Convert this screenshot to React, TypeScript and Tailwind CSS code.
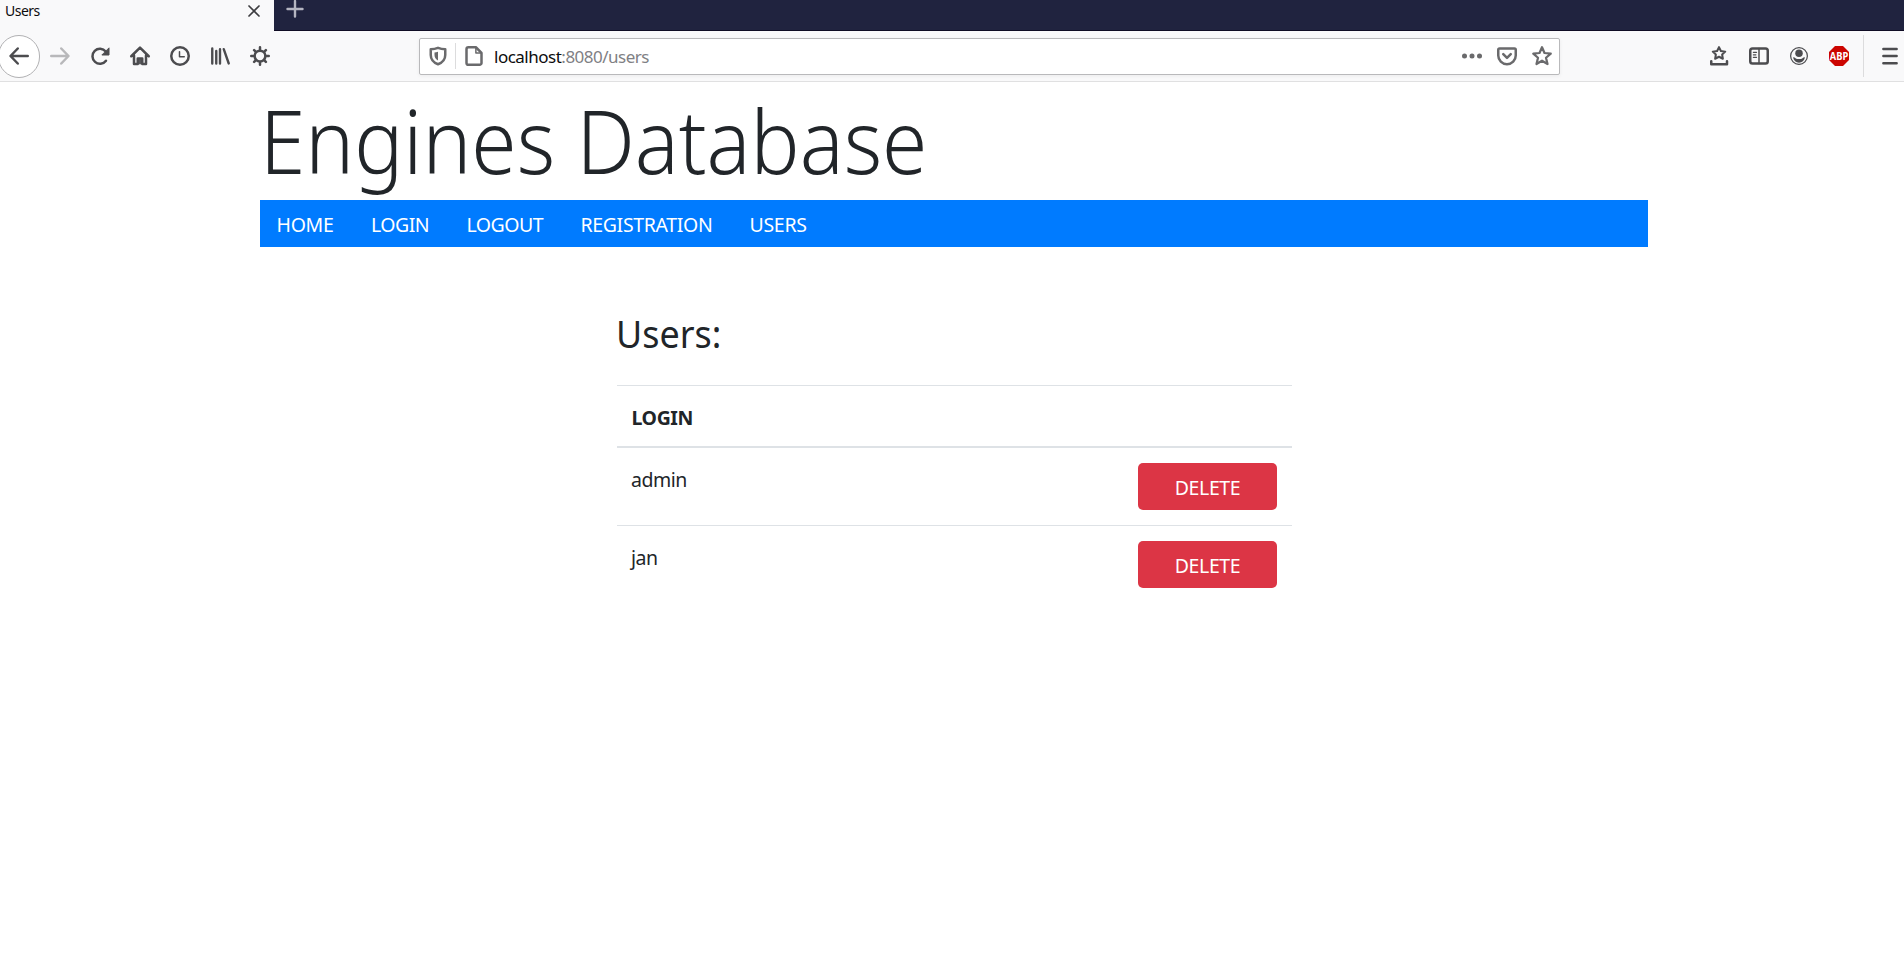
import React from "react";

const svg = "block h-5 w-5 shrink-0 overflow-visible";

function Icon({ children, color = "#4c4c4f", className = "" }: { children: React.ReactNode; color?: string; className?: string }) {
  return (
    <svg viewBox="0 0 16 16" className={`${svg} ${className}`} fill="none" stroke={color} strokeWidth={2} strokeLinecap="round" strokeLinejoin="round">
      {children}
    </svg>
  );
}

const navItems = [
  { label: "HOME", cls: "w-[94.5px] tracking-[-0.3px]" },
  { label: "LOGIN", cls: "w-[95.5px] tracking-[-0.5px]" },
  { label: "LOGOUT", cls: "w-[114px] tracking-[-0.5px]" },
  { label: "REGISTRATION", cls: "w-[169px] tracking-[-0.35px]" },
  { label: "USERS", cls: "tracking-[-0.3px]" },
];

function Chrome() {
  return (
    <header className="font-['Noto_Sans','Open_Sans',sans-serif]">
      <div className="flex h-[31px] border-b border-[#0f0c24] bg-[#20233f]">
        <div className="flex h-[31px] w-[274px] shrink-0 items-start justify-between bg-[#f9f9fa] pl-[5px] pr-[14.5px]">
          <span className="mt-[1px] text-[14px] leading-[20px] tracking-[-0.5px] text-[#0c0c0d]">Users</span>
          <svg viewBox="0 0 12 12" className="mt-[5px] block h-3 w-3" fill="none" stroke="#3d3d40" strokeWidth="1.7" strokeLinecap="round">
            <path d="M1 1l10 10M11 1L1 11" />
          </svg>
        </div>
        <svg viewBox="0 0 18 18" className="ml-3 block h-[18px] w-[18px]" fill="none" stroke="#b4b5c1" strokeWidth="2.4" strokeLinecap="round">
          <path d="M9 1v15.500M1.500 9h15" />
        </svg>
      </div>
      <div className="flex h-[51px] items-center border-b border-[#e0e0e1] bg-[#f9f9fa]">
        <div className="-ml-[2px] flex h-[43px] w-[42px] shrink-0 items-center justify-center rounded-full border border-[#b1b1b3] bg-white">
          <Icon>
            <path d="M15 8H1.500M7 2L1.200 8 7 14" />
          </Icon>
        </div>
        <div className="ml-[10px] flex gap-5">
          <Icon color="#b8b8ba">
            <path d="M1 8h13.500M9 2l5.800 6L9 14" />
          </Icon>
          <Icon>
            <path d="M12.800 11.800A6 6 0 1 1 12.600 4.400" />
            <path d="M15.200 1.800v5.400H9.800z" fill="#4c4c4f" strokeWidth="0.800" />
          </Icon>
          <Icon>
            <path d="M1 8.200L8 1.300l7 6.900M3.200 7.500v6.800h3V10h3.600v4.300h3V7.500" />
            <path d="M8 11v3" strokeWidth="1.500" />
          </Icon>
          <Icon>
            <circle cx="8" cy="8" r="7" />
            <path d="M7.600 4.500v4h3.800" strokeWidth="1.200" />
          </Icon>
          <Icon>
            <path d="M1.800 2v12M5 4v10M8 2.500v11.500M11 2.500l4 11.500" strokeWidth="1.900" />
          </Icon>
          <Icon>
            <circle cx="8" cy="8" r="4.300" />
            <path d="M8 1v2M8 13v2M1 8h2M13 8h2M3.300 3.300l1.200 1.200M11.500 11.500l1.200 1.200M3.300 12.700l1.200-1.200M11.500 4.500l1.200-1.200" />
          </Icon>
        </div>
        <div className="ml-[149px] flex h-[37px] w-[1141px] shrink-0 items-center rounded-[2px] border border-[#b9b9bb] bg-white shadow-[0_1px_4px_rgba(0,0,0,0.06)]">
          <Icon color="#6a6a6c" className="ml-[8px]">
            <path d="M8 1.500C6.300 2.200 4.200 2.600 2.200 2.600v4.600c0 3.600 2.200 6 5.800 7.400 3.600-1.400 5.800-3.800 5.800-7.400V2.600C11.800 2.600 9.700 2.200 8 1.500z" />
            <path d="M8 4.500C7 4.900 6 5.100 5.200 5.200v2C5.200 9.300 6.300 10.600 8 11.600z" fill="#6a6a6c" stroke="none" />
          </Icon>
          <div className="ml-[7px] h-[26px] w-px bg-[#dcdcdd]" />
          <Icon color="#6a6a6c" className="ml-[8px]">
            <path d="M3.500 1h6L14 5.500V13.500a1.500 1.500 0 0 1-1.500 1.500h-9A1.500 1.500 0 0 1 2 13.500v-11A1.500 1.500 0 0 1 3.500 1z" />
            <path d="M9.500 1.500V5.500h4" strokeWidth="1.200" />
          </Icon>
          <span className="ml-[10px] mt-[2px] text-[17px] leading-6 tracking-[-0.500px] text-[#808084]">
            <span className="text-[#0c0c0d]">localhost</span>:8080/users
          </span>
          <div className="ml-auto mr-[7px] flex gap-[15px]">
            <Icon color="#6a6a6c">
              <path d="M2 8h.01M8 8h.01M14 8h.01" strokeWidth="4" />
            </Icon>
            <Icon color="#6a6a6c">
              <path d="M2 2h12a1 1 0 0 1 1 1v4.500a7 7 0 0 1-14 0V3a1 1 0 0 1 1-1z" />
              <path d="M5 6.500l3 3 3-3" />
            </Icon>
            <Icon color="#6a6a6c">
              <path d="M8 1l2 4.600 5 .5-3.800 3.300 1.200 5L8 11.800l-4.400 2.600 1.200-5L1 6.100l5-.5z" strokeWidth="1.800" />
            </Icon>
          </div>
        </div>
        <div className="ml-[149px] flex gap-5">
          <Icon>
            <path d="M8 .900l1.500 3.100 3.500.500-2.500 2.300.600 3.400L8 8.600 4.900 10.200l.600-3.400L3 4.500l3.500-.500z" strokeWidth="1.600" />
            <path d="M1.800 12.200v2.300h12.600v-2.300" strokeWidth="2" />
          </Icon>
          <Icon>
            <rect x="1" y="2" width="14" height="12" rx="1.800" />
            <path d="M8 2v12" strokeWidth="1.200" />
            <path d="M3.500 5h2.500M3.500 7h2M3.500 9h2.500" strokeWidth="1" />
          </Icon>
          <Icon>
            <circle cx="8" cy="8" r="6.700" strokeWidth="1" />
            <circle cx="8" cy="5.800" r="3" fill="#4c4c4f" stroke="none" />
            <path d="M3.200 9c.900 0 1.700.300 2.300.900.700.700 4.300.700 5 0 .600-.600 1.400-.900 2.300-.900-.500 2.800-2.400 4.300-4.800 4.300s-4.300-1.500-4.800-4.300z" fill="#4c4c4f" stroke="none" />
          </Icon>
          <svg viewBox="0 0 20 20" className={svg}>
            <path d="M6 0h8l6 6v8l-6 6H6l-6-6V6z" fill="#cc0500" />
            <text x="10" y="14" textAnchor="middle" textLength="18.500" lengthAdjust="spacingAndGlyphs" fontSize="11" fontWeight="700" fill="#fff" className="font-['Open_Sans',sans-serif]">ABP</text>
          </svg>
        </div>
        <div className="ml-[14px] h-[42px] w-px bg-[#dcdcdd]" />
        <Icon className="ml-[16px]">
          <path d="M2.700 2.300h10.600M2.700 8h10.600M2.700 13.700h10.600" />
        </Icon>
      </div>
    </header>
  );
}

function UserRow({ name, last }: { name: string; last?: boolean }) {
  return (
    <div className={`flex h-[78px] items-start justify-between px-[15px] pt-[15px] ${last ? "" : "border-b border-[#dee2e6]"}`}>
      <span className="-ml-px mt-[2px] text-[19.500px] leading-[30px] tracking-[-0.500px]">{name}</span>
      <button className="h-[47px] w-[139px] rounded-[5px] bg-[#dc3545] pt-[2px] text-[19.500px] leading-[30px] tracking-[-0.400px] text-white">DELETE</button>
    </div>
  );
}

export default function App() {
  return (
    <div className="h-[977px] w-[1904px] overflow-hidden bg-white font-['Noto_Sans','Open_Sans',sans-serif] text-[#212529]">
      <Chrome />
      <main className="ml-[260px] w-[1388px]">
        <h1 className="h-[118px] origin-left scale-x-[0.932] whitespace-nowrap text-[88px] font-light leading-[116px]">Engines Database</h1>
        <nav className="flex h-[47px] items-center bg-[#007bff] pl-[16.5px] pt-[2px] text-[19.500px] leading-[30px] text-white">
          {navItems.map((n) => (
            <a key={n.label} className={`block shrink-0 ${n.cls}`}>{n.label}</a>
          ))}
        </nav>
        <section className="ml-[357px] w-[675px] pt-[63px]">
          <h2 className="-ml-px h-[75px] origin-left scale-x-[0.92] text-[39px] leading-[46px]">Users:</h2>
          <div className="h-[63px] border-b-2 border-t border-[#dee2e6] px-[14.5px] pt-[17px] text-[19.500px] font-bold leading-[30px] tracking-[-0.400px]">LOGIN</div>
          <UserRow name="admin" />
          <UserRow name="jan" last />
        </section>
      </main>
    </div>
  );
}
